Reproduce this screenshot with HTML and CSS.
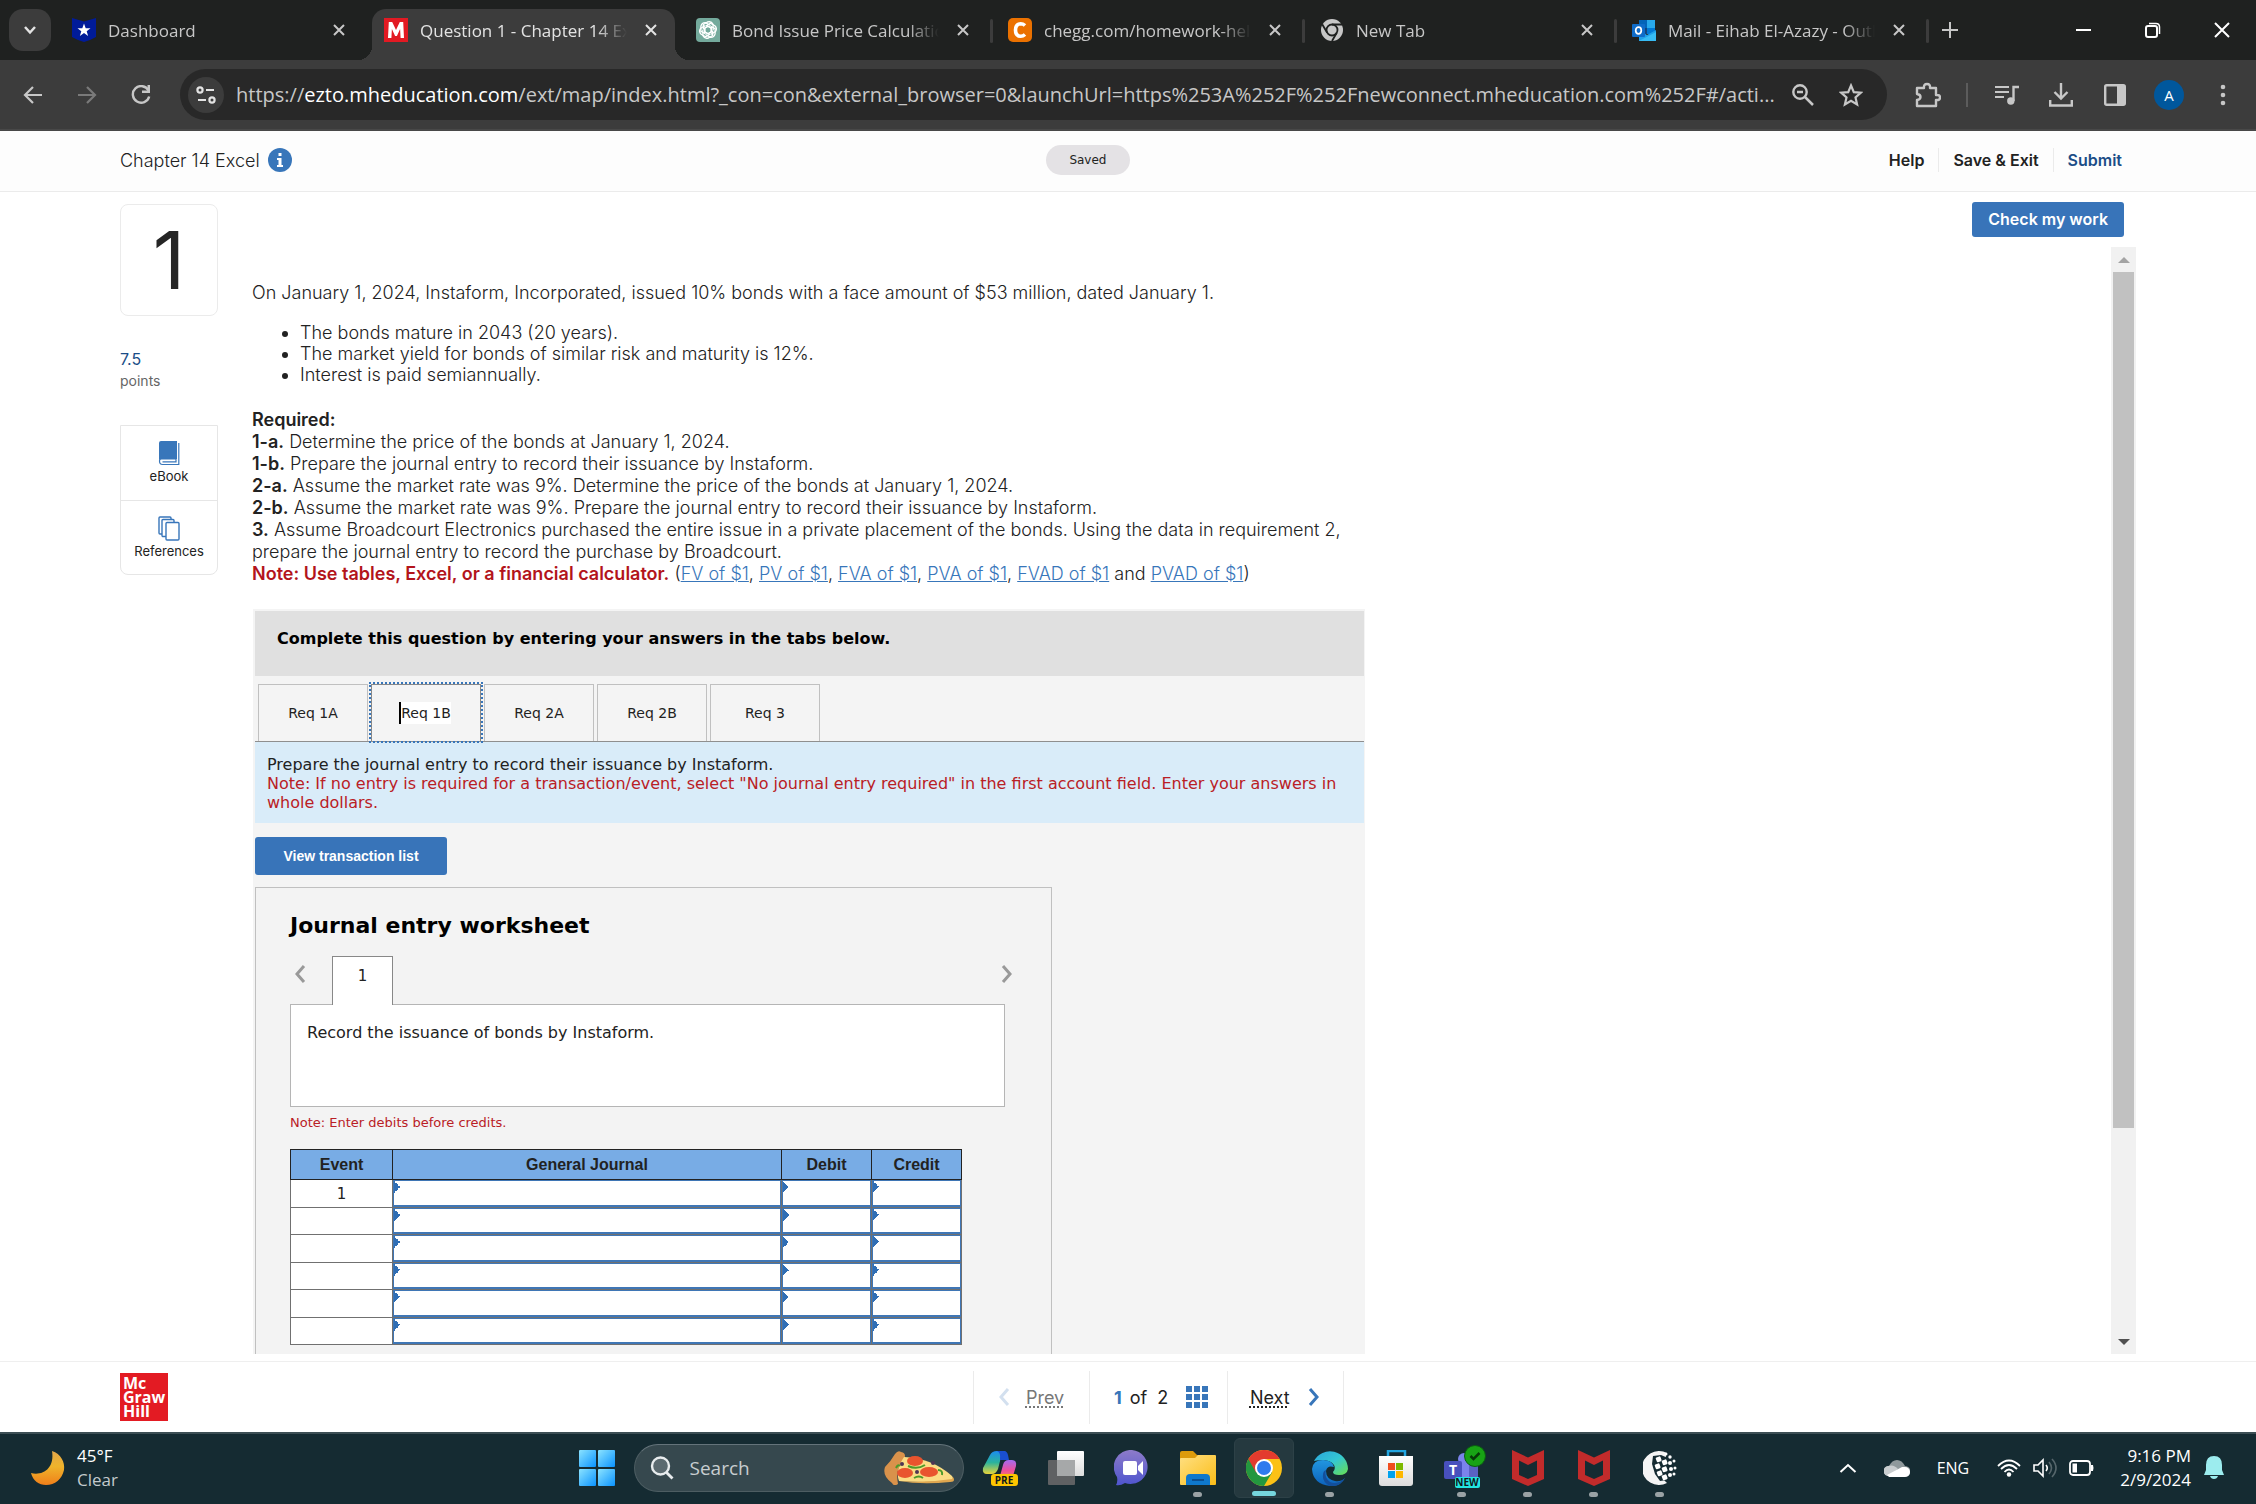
FILE: index.html
```html
<!DOCTYPE html>
<html lang="en">
<head>
    <meta charset="UTF-8">
    <meta name="viewport" content="width=device-width, initial-scale=1.0">
    <title>Question 1 - Chapter 14 Excel</title>
    <link rel="stylesheet" href="styles.css">
</head>
<body>

<!-- shared icons -->
<svg class="defs" width="0" height="0" aria-hidden="true">
    <defs>
        <linearGradient id="gWin" x1="0" y1="0" x2="1" y2="1"><stop offset="0" stop-color="#8be3ff"/><stop offset="1" stop-color="#0a93ff"/></linearGradient>
        <linearGradient id="gMoon" x1="0" y1="0" x2="0" y2="1"><stop offset="0" stop-color="#e2a64a"/><stop offset=".45" stop-color="#efb42b"/><stop offset="1" stop-color="#f07f1a"/></linearGradient>
        <linearGradient id="gFolder" x1="0" y1="0" x2="1" y2="1"><stop offset="0" stop-color="#ffe083"/><stop offset="1" stop-color="#fbbd17"/></linearGradient>
        <linearGradient id="gChat" x1="0" y1="0" x2="0" y2="1"><stop offset="0" stop-color="#8d7bc9"/><stop offset="1" stop-color="#4f55cf"/></linearGradient>
        <linearGradient id="gEdgeTop" x1="0" y1="0" x2="1" y2="1"><stop offset="0" stop-color="#2aa5dc"/><stop offset=".5" stop-color="#34c7d4"/><stop offset="1" stop-color="#69df4c"/></linearGradient>
        <linearGradient id="gEdge" x1="0" y1="0" x2="0" y2="1"><stop offset="0" stop-color="#2196e0"/><stop offset="1" stop-color="#0c62bb"/></linearGradient>
        <linearGradient id="gCopA" x1="0" y1="0" x2="0" y2="1"><stop offset="0" stop-color="#1b8cf0"/><stop offset=".5" stop-color="#2bb39c"/><stop offset="1" stop-color="#e8d43a"/></linearGradient>
        <linearGradient id="gCopB" x1="0" y1="0" x2="0" y2="1"><stop offset="0" stop-color="#a46bf0"/><stop offset=".5" stop-color="#ee4f9a"/><stop offset="1" stop-color="#f59a4a"/></linearGradient>
        <linearGradient id="gWhite" x1="0" y1="0" x2="0" y2="1"><stop offset="0" stop-color="#ffffff"/><stop offset="1" stop-color="#dcdcdc"/></linearGradient>
    </defs>
    <symbol id="i-close" viewBox="0 0 14 14"><path d="M2 2l10 10M12 2L2 12" stroke="currentColor" stroke-width="2" fill="none"/></symbol>
    <symbol id="i-left" viewBox="0 0 12 20"><path d="M10 2L3 10l7 8" stroke="currentColor" stroke-width="3" fill="none"/></symbol>
    <symbol id="i-right" viewBox="0 0 12 20"><path d="M2 2l7 8-7 8" stroke="currentColor" stroke-width="3" fill="none"/></symbol>
    <symbol id="i-mcafee" viewBox="0 0 32 36"><path d="M0 0l16 7.500L32 0v29L16 36 0 29zM7 10.500v14.500l9 4 9-4V10.500L16 15z" fill="#c22b2b" fill-rule="evenodd"/></symbol>
</svg>

<div class="tabstrip">
    <button class="tab-menu" aria-label="Search tabs"><svg width="14" height="10" viewBox="0 0 14 10"><path d="M2 2l5 5.500L12 2" stroke="#e3e3e3" stroke-width="2.500" fill="none"/></svg></button>
    <div class="tab">
        <svg class="favicon" viewBox="0 0 24 24"><path d="M0 0l12 3.500L24 0v19l-6 3-6 2-6-2-6-3z" fill="#001b99"/><path d="M12 5.500l1.700 4.700h4.800l-3.800 3 1.400 4.800-4.100-2.900L7.900 18l1.400-4.800-3.800-3h4.800z" fill="#fff"/></svg>
        <span class="tab-title">Dashboard</span>
        <button class="tab-close" aria-label="Close tab"><svg width="14" height="14"><use href="#i-close"/></svg></button>
    </div>
    <div class="tab active">
        <svg class="favicon" viewBox="0 0 24 24"><path d="M0 0h24v24H0z" fill="#e21a23"/><path d="M4 20L4.800 4h3.400L12 12l3.800-8h3.400L20 20h-3.400l-.5-9-3.200 7h-1.800l-3.200-7-.5 9z" fill="#fff"/></svg>
        <span class="tab-title">Question 1 - Chapter 14 Excel</span>
        <button class="tab-close" aria-label="Close tab"><svg width="14" height="14"><use href="#i-close"/></svg></button>
    </div>
    <div class="tab divided">
        <svg class="favicon" viewBox="0 0 24 24"><path d="M4 0h16q4 0 4 4v20H4q-4 0-4-4V4q0-4 4-4z" fill="#74aa9c"/><g fill="none" stroke="#fff" stroke-width="1.300"><path id="petal" d="M12 8.200L8.800 10v5.500L4.900 13.300V8.200q1-3.700 4.600-3.500L14.500 7.500"/><use href="#petal" transform="rotate(60 12 12)"/><use href="#petal" transform="rotate(120 12 12)"/><use href="#petal" transform="rotate(180 12 12)"/><use href="#petal" transform="rotate(240 12 12)"/><use href="#petal" transform="rotate(300 12 12)"/></g></svg>
        <span class="tab-title">Bond Issue Price Calculation</span>
        <button class="tab-close" aria-label="Close tab"><svg width="14" height="14"><use href="#i-close"/></svg></button>
    </div>
    <div class="tab divided">
        <svg class="favicon" viewBox="0 0 24 24"><rect width="24" height="24" rx="5" fill="#eb7100"/><path d="M17 7.500Q15 5.700 12.700 5.700 7.500 6 7.500 12t5.200 6.300Q15 18.300 17 16.500" fill="none" stroke="#fff" stroke-width="3.600"/></svg>
        <span class="tab-title">chegg.com/homework-help</span>
        <button class="tab-close" aria-label="Close tab"><svg width="14" height="14"><use href="#i-close"/></svg></button>
    </div>
    <div class="tab divided">
        <svg class="favicon" viewBox="0 0 24 24"><circle cx="12" cy="12" r="11" fill="#c7c7c7"/><circle cx="12" cy="12" r="5.500" fill="#c7c7c7" stroke="#1f2120" stroke-width="1.800"/><path d="M12 6.500h10M7.200 14.700l-5-8.500M16.800 14.700L12 23" stroke="#1f2120" stroke-width="1.800"/></svg>
        <span class="tab-title">New Tab</span>
        <button class="tab-close" aria-label="Close tab"><svg width="14" height="14"><use href="#i-close"/></svg></button>
    </div>
    <div class="tab divided">
        <svg class="favicon" viewBox="0 0 24 24"><path d="M7 2h8v8H7z" fill="#0364b8"/><path d="M15 2h8v8h-8z" fill="#28a8ea"/><path d="M7 10h8v6H7z" fill="#14447d"/><path d="M15 10h8v6h-8z" fill="#0078d4"/><path d="M7 12l8 5 9-5v11H7z" fill="#1f9fe8"/><path d="M7 23l17-9v9z" fill="#50d9ff" opacity=".5"/><rect y="6" width="13" height="13" rx="1" fill="#0f6cc9"/><ellipse cx="6.500" cy="12.500" rx="2.800" ry="3.300" fill="none" stroke="#fff" stroke-width="1.700"/></svg>
        <span class="tab-title">Mail - Eihab El-Azazy - Outlook</span>
        <button class="tab-close" aria-label="Close tab"><svg width="14" height="14"><use href="#i-close"/></svg></button>
    </div>
    <button class="new-tab" aria-label="New tab"><svg width="16" height="16" viewBox="0 0 16 16"><path d="M8 0v16M0 8h16" stroke="#c7c7c7" stroke-width="2"/></svg></button>
    <div class="window-buttons">
        <button aria-label="Minimize"><svg width="16" height="16" viewBox="0 0 16 16"><path d="M0 8h15" stroke="#fff" stroke-width="2"/></svg></button>
        <button aria-label="Restore"><svg width="16" height="16" viewBox="0 0 16 16"><rect x="1" y="4" width="11" height="11" rx="2" fill="none" stroke="#fff" stroke-width="2"/><path d="M4 1.500h7q3.500 0 3.500 3.500v7" fill="none" stroke="#fff" stroke-width="1.500"/></svg></button>
        <button aria-label="Close"><svg width="16" height="16" viewBox="0 0 16 16"><path d="M1 1l14 14M15 1L1 15" stroke="#fff" stroke-width="2"/></svg></button>
    </div>
</div>

<div class="toolbar">
    <button class="nav-btn" aria-label="Back"><svg width="20" height="20" viewBox="0 0 20 20"><path d="M19 10H2M10 2l-8 8 8 8" fill="none" stroke="#c7c7c7" stroke-width="2.200"/></svg></button>
    <button class="nav-btn" aria-label="Forward"><svg width="20" height="20" viewBox="0 0 20 20"><path d="M1 10h17M10 2l8 8-8 8" fill="none" stroke="#7a7a7a" stroke-width="2.200"/></svg></button>
    <button class="nav-btn" aria-label="Reload"><svg width="20" height="20" viewBox="0 0 20 20"><path d="M17.500 5.500A8.300 8.300 0 1 0 18.200 11.500" fill="none" stroke="#c7c7c7" stroke-width="2.400"/><path d="M19 0v8h-8V5.500h5.500V0z" fill="#c7c7c7"/></svg></button>
    <div class="address">
        <button class="site-info" aria-label="View site information"><svg width="20" height="18" viewBox="0 0 20 18"><g fill="none" stroke="#e3e3e3" stroke-width="2.200"><circle cx="4" cy="4" r="2.600"/><path d="M10 4h8M2 14h8"/><circle cx="16" cy="14" r="2.600"/></g></svg></button>
        <div class="url">https://<b>ezto.mheducation.com</b>/ext/map/index.html?_con=con&amp;external_browser=0&amp;launchUrl=https%253A%252F%252Fnewconnect.mheducation.com%252F#/acti...</div>
        <button aria-label="Zoom"><svg width="22" height="22" viewBox="0 0 22 22"><circle cx="8" cy="8" r="6.700" fill="none" stroke="#c7c7c7" stroke-width="2.400"/><path d="M5 8h6M13 13l8 8" stroke="#c7c7c7" stroke-width="2.500"/></svg></button>
        <button aria-label="Bookmark this tab"><svg width="24" height="24" viewBox="0 0 24 24"><path d="M12 2.500l2.800 6.600 7.100.6-5.400 4.700 1.600 7L12 17.700 5.900 21.400l1.600-7L2.100 9.700l7.100-.6z" fill="none" stroke="#c7c7c7" stroke-width="2.200"/></svg></button>
    </div>
    <div class="toolbar-actions">
        <button aria-label="Extensions"><svg width="26" height="26" viewBox="0 0 26 26"><path d="M2 6h7q-.5-4 3-4t3 4h6v7q4-.5 4 2.500T21 18v6H2v-6q3.500-.5 3.500-3T2 12z" fill="none" stroke="#c7c7c7" stroke-width="2.400" stroke-linejoin="round"/></svg></button>
        <span class="toolbar-sep"></span>
        <button aria-label="Media"><svg width="24" height="22" viewBox="0 0 24 22"><path d="M0 3h14M0 8h14M0 13h9" stroke="#c7c7c7" stroke-width="2.200"/><path d="M18.500 17V3H24" stroke="#c7c7c7" stroke-width="2.400" fill="none"/><circle cx="15.800" cy="17" r="3.700" fill="#c7c7c7"/></svg></button>
        <button aria-label="Downloads"><svg width="24" height="24" viewBox="0 0 24 24"><path d="M12 0v15M5.500 9l6.500 6.500L18.500 9M1.200 17v5.500h21.600V17" stroke="#c7c7c7" stroke-width="2.400" fill="none"/></svg></button>
        <button aria-label="Side panel"><svg width="22" height="22" viewBox="0 0 22 22"><rect x="1.200" y="1.200" width="19.600" height="19.600" rx="1.500" fill="none" stroke="#c7c7c7" stroke-width="2.400"/><path d="M13 1h8v20h-8z" fill="#c7c7c7"/></svg></button>
        <button class="avatar" aria-label="Profile">A</button>
        <button aria-label="Menu"><svg width="6" height="22" viewBox="0 0 6 22"><g fill="#c7c7c7"><circle cx="3" cy="3" r="2.300"/><circle cx="3" cy="11" r="2.300"/><circle cx="3" cy="19" r="2.300"/></g></svg></button>
    </div>
</div>

<header class="page-header">
    <div class="assignment">
        <span>Chapter 14 Excel</span>
        <svg width="24" height="24" viewBox="0 0 24 24"><circle cx="12" cy="12" r="12" fill="#3876ba"/><path d="M10.500 5h3v3h-3zM9 10h4.500v7H15v2H9v-2h1.500v-5H9z" fill="#fff"/></svg>
    </div>
    <span class="saved">Saved</span>
    <nav class="page-links">
        <a href="#">Help</a>
        <a href="#">Save &amp; Exit</a>
        <a href="#" class="submit">Submit</a>
    </nav>
</header>

<main>
    <aside class="sidebar">
        <div class="question-number">1</div>
        <div class="points"><strong>7.5</strong><span>points</span></div>
        <div class="resources">
            <a href="#"><svg width="22" height="25" viewBox="0 0 22 25"><path d="M3 0h16v18H3q-2 0-2 2V2q0-2 2-2z" fill="#3876ba"/><path d="M1.500 20q0 3.500 3 3.500h16.300V2M4.500 20.800H18V18H3.500q-2 0-2 2" fill="none" stroke="#3876ba" stroke-width="1.200"/></svg>eBook</a>
            <a href="#"><svg width="22" height="25" viewBox="0 0 22 25"><g fill="#fff" stroke="#3876ba" stroke-width="1.400"><rect x="1" y="1" width="12" height="17" rx="1"/><rect x="4" y="3.500" width="12" height="17" rx="1"/><rect x="8" y="6.500" width="13" height="17.500" rx="1"/></g></svg>References</a>
        </div>
    </aside>

    <div class="content">
        <div class="check-row"><button class="btn check">Check my work</button></div>
        <div class="scroller">
            <div class="question">
                <p>On January 1, 2024, Instaform, Incorporated, issued 10% bonds with a face amount of $53 million, dated January 1.</p>
                <ul>
                    <li>The bonds mature in 2043 (20 years).</li>
                    <li>The market yield for bonds of similar risk and maturity is 12%.</li>
                    <li>Interest is paid semiannually.</li>
                </ul>
                <p class="required">
                    <b>Required:</b><br>
                    <b>1-a.</b> Determine the price of the bonds at January 1, 2024.<br>
                    <b>1-b.</b> Prepare the journal entry to record their issuance by Instaform.<br>
                    <b>2-a.</b> Assume the market rate was 9%. Determine the price of the bonds at January 1, 2024.<br>
                    <b>2-b.</b> Assume the market rate was 9%. Prepare the journal entry to record their issuance by Instaform.<br>
                    <b>3.</b> Assume Broadcourt Electronics purchased the entire issue in a private placement of the bonds. Using the data in requirement 2,<br>
                    prepare the journal entry to record the purchase by Broadcourt.<br>
                    <b class="note">Note: Use tables, Excel, or a financial calculator.</b> (<a href="#">FV of $1</a>, <a href="#">PV of $1</a>, <a href="#">FVA of $1</a>, <a href="#">PVA of $1</a>, <a href="#">FVAD of $1</a> and <a href="#">PVAD of $1</a>)
                </p>

                <section class="panel">
                    <h2>Complete this question by entering your answers in the tabs below.</h2>
                    <div class="req-tabs">
                        <button>Req 1A</button>
                        <button class="selected"><span>Req 1B</span></button>
                        <button>Req 2A</button>
                        <button>Req 2B</button>
                        <button>Req 3</button>
                    </div>
                    <div class="instructions">
                        Prepare the journal entry to record their issuance by Instaform.
                        <div class="red">Note: If no entry is required for a transaction/event, select "No journal entry required" in the first account field. Enter your answers in whole dollars.</div>
                    </div>
                    <button class="btn view-list">View transaction list</button>

                    <div class="worksheet">
                        <h3>Journal entry worksheet</h3>
                        <div class="entry-nav">
                            <button class="arrow" aria-label="Previous entry"><svg width="12" height="20"><use href="#i-left"/></svg></button>
                            <button class="entry-tab">1</button>
                            <button class="arrow last" aria-label="Next entry"><svg width="12" height="20"><use href="#i-right"/></svg></button>
                        </div>
                        <div class="entry-text">Record the issuance of bonds by Instaform.</div>
                        <p class="red small">Note: Enter debits before credits.</p>
                        <table>
                            <thead>
                                <tr><th class="c-event">Event</th><th>General Journal</th><th class="c-num">Debit</th><th class="c-num">Credit</th></tr>
                            </thead>
                            <tbody>
                                <tr><td>1</td><td class="cell"><input aria-label="Account, line 1"></td><td class="cell"><input aria-label="Debit, line 1"></td><td class="cell"><input aria-label="Credit, line 1"></td></tr>
                                <tr><td></td><td class="cell"><input aria-label="Account, line 2"></td><td class="cell"><input aria-label="Debit, line 2"></td><td class="cell"><input aria-label="Credit, line 2"></td></tr>
                                <tr><td></td><td class="cell"><input aria-label="Account, line 3"></td><td class="cell"><input aria-label="Debit, line 3"></td><td class="cell"><input aria-label="Credit, line 3"></td></tr>
                                <tr><td></td><td class="cell"><input aria-label="Account, line 4"></td><td class="cell"><input aria-label="Debit, line 4"></td><td class="cell"><input aria-label="Credit, line 4"></td></tr>
                                <tr><td></td><td class="cell"><input aria-label="Account, line 5"></td><td class="cell"><input aria-label="Debit, line 5"></td><td class="cell"><input aria-label="Credit, line 5"></td></tr>
                                <tr><td></td><td class="cell"><input aria-label="Account, line 6"></td><td class="cell"><input aria-label="Debit, line 6"></td><td class="cell"><input aria-label="Credit, line 6"></td></tr>
                            </tbody>
                        </table>
                    </div>
                </section>
            </div>
            <div class="scrollbar">
                <button aria-label="Scroll up"><svg width="12" height="6" viewBox="0 0 12 6"><path d="M0 6l6-6 6 6z" fill="#a3a3a3"/></svg></button>
                <div class="track"><div class="thumb"></div></div>
                <button aria-label="Scroll down"><svg width="12" height="6" viewBox="0 0 12 6"><path d="M0 0l6 6 6-6z" fill="#505050"/></svg></button>
            </div>
        </div>
    </div>
</main>

<footer class="page-footer">
    <div class="logo">Mc<br>Graw<br>Hill</div>
    <nav class="pager">
        <a href="#" class="prev"><svg width="12" height="20"><use href="#i-left"/></svg><span>Prev</span></a>
        <div class="count"><b>1</b> of&nbsp; 2 <svg width="22" height="22" viewBox="0 0 22 22"><path d="M0 0h6v6H0zM8 0h6v6H8zM16 0h6v6h-6zM0 8h6v6H0zM8 8h6v6H8zM16 8h6v6h-6zM0 16h6v6H0zM8 16h6v6H8zM16 16h6v6h-6z" fill="#3876ba"/></svg></div>
        <a href="#" class="next"><span>Next</span><svg width="12" height="20"><use href="#i-right"/></svg></a>
    </nav>
</footer>

<div class="taskbar">
    <div class="weather">
        <svg width="34" height="34" viewBox="0 0 34 34"><path d="M21 0C30 3 34 11 33 19 31 28 24 34 15 34 8 34 2 30 0 22c11 3 24-4 21-22z" fill="url(#gMoon)"/></svg>
        <div>45°F<span>Clear</span></div>
    </div>
    <div class="apps">
        <button class="app" aria-label="Start"><svg width="36" height="36" viewBox="0 0 36 36"><g fill="url(#gWin)"><rect width="17" height="17" rx="1"/><rect x="19" width="17" height="17" rx="1"/><rect y="19" width="17" height="17" rx="1"/><rect x="19" y="19" width="17" height="17" rx="1"/></g></svg></button>
        <label class="search">
            <svg width="24" height="24" viewBox="0 0 24 24"><circle cx="10.500" cy="10" r="8.500" fill="#5b6a70" stroke="#e8ecee" stroke-width="2.400"/><path d="M16.500 16.500l6 6" stroke="#e8ecee" stroke-width="2.800"/></svg>
            <input type="text" placeholder="Search" aria-label="Search">
            <svg width="70" height="34" viewBox="0 0 70 34"><path d="M17 1Q23 2 20 9 11 17 14 33q-4 3-6-1Q-2 25 1 16 7 10 11 3 14-1 17 1z" fill="#d9924b"/><path d="M20 6Q48 7 68 25q3 4-2 5-28 2-51 0-4-11 5-24z" fill="#fbdc84"/><path d="M15 30q28 2 53-2l1-2q3 5-3 5-28 3-51-1z" fill="#e0a64f"/><g fill="#e9542e"><ellipse cx="31" cy="10" rx="8" ry="5"/><ellipse cx="21" cy="22" rx="8" ry="5"/><ellipse cx="45" cy="21" rx="9" ry="5"/></g><g fill="none" stroke="#4c9a2a" stroke-width="2"><path d="M24 15q9 4 17-1M12 17q2-4 4-2M30 27q5-3 9 0M54 19q5 0 4 5"/></g><g fill="#503454"><circle cx="18" cy="13" r="2"/><circle cx="33" cy="21" r="2"/><circle cx="49" cy="12" r="2"/></g></svg>
        </label>
        <button class="app" aria-label="Copilot"><svg width="36" height="36" viewBox="0 0 36 36"><path d="M8 5q2-4 7-4h9q-4 1-5 6l-3 12q-2 5-6 5H5q-5 0-4-6z" fill="url(#gCopA)"/><path d="M15 1h7q3 0 4 4l1 5h-9q1-8-3-9z" fill="#1a4fd0"/><path d="M21 15q1-5 6-5h3q5 0 4 6l-3 10q-2 5-6 5H14q3-1 4-5z" fill="url(#gCopB)"/><rect x="9" y="24" width="27" height="12" rx="3" fill="#fdc500"/><text x="22" y="34" class="tag">PRE</text></svg></button>
        <button class="app" aria-label="Task view"><svg width="36" height="36" viewBox="0 0 36 36"><rect x="9" y="1" width="27" height="25" rx="1" fill="url(#gWhite)"/><rect y="10" width="27" height="25" rx="1" fill="#5f6163"/><path d="M9 10h18v16H9z" fill="#a6a8a9"/></svg></button>
        <button class="app" aria-label="Chat"><svg width="36" height="36" viewBox="0 0 36 36"><path d="M18 0a17 17 0 1 1-7 33Q6 36 2 35q2-3 1-8A17 17 0 0 1 18 0z" fill="url(#gChat)"/><rect x="9" y="11" width="14" height="14" rx="2" fill="#fff"/><path d="M24 16l5-5v14l-5-5z" fill="#fff"/></svg></button>
        <button class="app open" aria-label="File Explorer"><svg width="38" height="36" viewBox="0 0 38 36"><path d="M1 3q0-2 2-2h11l4 4h18v10H1z" fill="#dd9b0b"/><path d="M1 9q0-1 1-1h14l3-3h17q1 0 1 1v28q0 1-1 1H2q-1 0-1-1z" fill="url(#gFolder)"/><path d="M7 35V28q0-4 4-4h16q4 0 4 4v7z" fill="#0f78cc"/><path d="M13 30h12" stroke="#0a4f92" stroke-width="2"/></svg></button>
        <button class="app open current" aria-label="Google Chrome"><svg width="36" height="36" viewBox="0 0 36 36"><circle cx="18" cy="18" r="18" fill="#fbc116"/><path d="M18 18L2.400 9A18 18 0 0 0 18 36l8-13.500z" fill="#23973f"/><path d="M2.400 9A18 18 0 0 1 33.600 9H18L10 22.500z" fill="#e33b2e"/><circle cx="18" cy="18" r="9" fill="#fff"/><circle cx="18" cy="18" r="7" fill="#2f7bee"/></svg></button>
        <button class="app open" aria-label="Microsoft Edge"><svg width="36" height="36" viewBox="0 0 36 36"><path d="M2 11A18 18 0 0 1 36 19q-1 6-9 6-6 0-6-3 3-3 1-7-5-7-20-4z" fill="url(#gEdgeTop)"/><path d="M0 19Q1 10 11 10q9 0 11 7-7-2-8 4 0 8 9 10 6 1 10-3-5 9-15 8Q1 34 0 19z" fill="url(#gEdge)"/><path d="M14 20q-2 8 4 12 8 3 15-4-5 9-15 8-8-4-7-11 0-4 3-5z" fill="#134f9b"/></svg></button>
        <button class="app" aria-label="Microsoft Store"><svg width="36" height="36" viewBox="0 0 36 36"><path d="M10 8V1h17v7" fill="none" stroke="#22a5e0" stroke-width="2.500"/><path d="M1 6h34v27q0 3-3 3H4q-3 0-3-3z" fill="url(#gWhite)"/><path d="M10 13h7v7h-7z" fill="#f04e1f"/><path d="M18 13h7v7h-7z" fill="#7db900"/><path d="M10 21h7v7h-7z" fill="#00a2ee"/><path d="M18 21h7v7h-7z" fill="#fdb700"/></svg></button>
        <button class="app open" aria-label="Microsoft Teams"><svg width="48" height="48" viewBox="-6 0 48 48"><circle cx="20" cy="15" r="6" fill="#7b83eb"/><path d="M18 21h16v18H18z" fill="#5a62c3"/><path d="M12 20h13v16H12z" fill="#7b83eb"/><rect y="17" width="18" height="18" rx="2" fill="#4850bd"/><text x="9" y="31" class="teams-t">T</text><circle cx="31" cy="12" r="10.500" fill="#18a315" stroke="#0b5d12" stroke-width="1"/><path d="M26.500 12l3 3 6-6" fill="none" stroke="#063b08" stroke-width="2.500"/><rect x="11" y="33" width="25" height="11" rx="2" fill="#22e5e0"/><text x="23" y="42" class="tag">NEW</text></svg></button>
        <button class="app open" aria-label="McAfee"><svg width="32" height="36"><use href="#i-mcafee"/></svg></button>
        <button class="app open" aria-label="McAfee WebAdvisor"><svg width="32" height="36"><use href="#i-mcafee"/></svg></button>
        <button class="app open" aria-label="WebMoney"><svg width="34" height="34" viewBox="0 0 34 34"><path d="M24 2A17 17 0 1 0 24 32l-3-3 2-25z" fill="#f4f4f4"/><path d="M10 5l8-1 7 3 2 11-3 11-7 1-5-7-3-10z" fill="#152b32"/><g fill="#fff"><rect x="13" y="6" width="5" height="5" rx="1" transform="rotate(-20 15 8)"/><rect x="12" y="13" width="5" height="5" rx="1" transform="rotate(-20 14 15)"/><rect x="14" y="20" width="5" height="5" rx="1" transform="rotate(-20 16 22)"/><rect x="19" y="9" width="5" height="5" rx="1" transform="rotate(-20 21 11)"/><rect x="19" y="16" width="5" height="5" rx="1" transform="rotate(-20 21 18)"/><rect x="19" y="24" width="5" height="5" rx="1" transform="rotate(-20 21 26)"/><circle cx="23" cy="3" r="1.500"/><circle cx="27" cy="6" r="1.700"/><circle cx="27" cy="12" r="2"/><circle cx="31" cy="10" r="1.500"/><circle cx="28" cy="18" r="2"/><circle cx="32" cy="17" r="1.500"/><circle cx="27" cy="24" r="2"/><circle cx="31" cy="23" r="1.500"/></g></svg></button>
    </div>
    <div class="tray">
        <button aria-label="Show hidden icons"><svg width="18" height="10" viewBox="0 0 18 10"><path d="M1.500 9L9 2l7.500 7" fill="none" stroke="#fff" stroke-width="2"/></svg></button>
        <svg class="cloud" width="26" height="17" viewBox="0 0 26 17"><path d="M5 16a5 5 0 0 1 0-10Q8 0 13 0t8 6a5 5 0 0 1 0 11z" fill="#8f999c"/><path d="M5 16a5 5 0 0 1-1-10q6-2 10 3z" fill="#c9cdcf"/><path d="M3 15L18 7h3a5 5 0 0 1 0 10H5z" fill="#fff"/></svg>
        <span class="lang">ENG</span>
        <svg class="wifi" width="24" height="18" viewBox="0 0 24 18"><g fill="none" stroke="#fff" stroke-width="1.800"><path d="M1 7q11-11 22 0M4 10q8-8 16 0M7.500 13q4.500-5 9 0"/></g><circle cx="12" cy="15.500" r="2.200" fill="#fff"/></svg>
        <svg class="volume" width="25" height="20" viewBox="0 0 25 20"><path d="M1 7h4l5-5v16l-5-5H1z" fill="none" stroke="#fff" stroke-width="1.600"/><path d="M13 7q2.500 3 0 6" fill="none" stroke="#fff" stroke-width="1.600"/><path d="M16 4q5 6 0 12M19 1q8 9 0 18" fill="none" stroke="#56666b" stroke-width="1.600"/></svg>
        <svg class="battery" width="25" height="16" viewBox="0 0 25 16"><rect x="1" y="1" width="20" height="14" rx="3" fill="none" stroke="#fff" stroke-width="1.800"/><path d="M3.500 3.500H8v9H3.500zM22 5h2q1 3 0 6h-2z" fill="#fff"/></svg>
        <div class="clock">9:16 PM<br>2/9/2024</div>
        <svg width="20" height="24" viewBox="0 0 20 24"><path d="M2 9q0-9 8-9t8 9v5l2 5H0l2-5zM6 20h8q-1 3-4 3t-4-3z" fill="#9cecee"/></svg>
    </div>
</div>

</body>
</html>
```
FILE: styles.css
```css
* {
    box-sizing: border-box;
}
body {
    margin: 0;
    height: 100vh;
    display: flex;
    flex-direction: column;
    overflow: hidden;
    background: #fff;
    color: #222;
    font-family: Inter, "Open Sans", sans-serif;
    font-size: 18px;
}
button {
    font: inherit;
    color: inherit;
    background: none;
    border: none;
    padding: 0;
    display: flex;
    align-items: center;
    justify-content: center;
}
svg {
    flex-shrink: 0;
}
.defs {
    position: absolute;
}

/* browser tabs */
.tabstrip {
    display: flex;
    align-items: stretch;
    gap: 9px;
    height: 60px;
    flex-shrink: 0;
    padding: 9px 0 0 9px;
    background: #1f2120;
    color: #c7c7c7;
    font-family: "Open Sans", sans-serif;
    font-size: 17px;
}
.tab-menu {
    width: 42px;
    height: 42px;
    border-radius: 14px;
    background: #3c3c3c;
}
.tab {
    position: relative;
    flex: 0 1 303px;
    min-width: 0;
    display: flex;
    align-items: center;
    gap: 12px;
    padding: 0 12px 9px;
}
.favicon {
    width: 24px;
    height: 24px;
}
.tab-title {
    flex: 1;
    min-width: 0;
    overflow: hidden;
    white-space: nowrap;
    -webkit-mask-image: linear-gradient(to right, #000 85%, transparent);
    mask-image: linear-gradient(to right, #000 85%, transparent);
}
.tab-close {
    width: 24px;
    height: 24px;
}
.tab.active {
    background: #3c3c3c;
    color: #e3e3e3;
    border-radius: 14px 14px 0 0;
}
.tab.active::before,
.tab.active::after {
    content: "";
    position: absolute;
    bottom: 0;
    width: 14px;
    height: 14px;
}
.tab.active::before {
    left: -14px;
    background: radial-gradient(circle at 0 0, transparent 14px, #3c3c3c 14px);
}
.tab.active::after {
    right: -14px;
    background: radial-gradient(circle at 100% 0, transparent 14px, #3c3c3c 14px);
}
.tab.divided::after {
    content: "";
    position: absolute;
    top: 10px;
    right: -6px;
    width: 3px;
    height: 24px;
    border-radius: 2px;
    background: #3c3c3c;
}
.new-tab {
    width: 24px;
    height: 42px;
    margin-left: 6px;
}
.window-buttons {
    display: flex;
    margin-left: auto;
    height: 42px;
}
.window-buttons button {
    width: 69px;
}

/* browser toolbar */
.toolbar {
    display: flex;
    align-items: center;
    height: 71px;
    flex-shrink: 0;
    padding: 0 6px;
    background: #3c3c3c;
    border-bottom: 2px solid #484848;
    font-family: "Open Sans", sans-serif;
}
.nav-btn {
    width: 54px;
    height: 42px;
}
.address {
    flex: 1;
    min-width: 0;
    display: flex;
    align-items: center;
    height: 51px;
    margin-left: 12px;
    padding: 0 12px 0 8px;
    border-radius: 26px;
    background: #282828;
    color: #c7c7c7;
    font-size: 20px;
}
.address button {
    width: 48px;
    height: 36px;
}
.address .site-info {
    width: 36px;
    margin-right: 12px;
    border-radius: 18px;
    background: #3c3c3c;
}
.url {
    flex: 1;
    min-width: 0;
    overflow: hidden;
    white-space: nowrap;
}
.url b {
    font-weight: normal;
    color: #fff;
}
.toolbar-actions {
    display: flex;
    align-items: center;
    margin-left: 14px;
}
.toolbar-actions button {
    width: 54px;
    height: 42px;
}
.toolbar-sep {
    width: 2px;
    height: 24px;
    margin: 0 12px 0 11px;
    background: #5c5c5c;
}
.toolbar-actions .avatar {
    width: 30px;
    height: 30px;
    margin: 0 12px;
    border-radius: 50%;
    background: #00579c;
    color: #fff;
    font-size: 15px;
}

/* assignment header */
.page-header {
    display: grid;
    grid-template-columns: 14fr auto 15fr;
    align-items: center;
    height: 61px;
    flex-shrink: 0;
    padding: 0 134px 2px 120px;
    background: #fdfdfd;
    border-bottom: 1px solid #ebebeb;
}
.assignment {
    display: flex;
    align-items: center;
    gap: 8px;
    font-weight: 300;
}
.saved {
    width: 84px;
    padding: 7px 0;
    border-radius: 15px;
    background: #e4e2e5;
    font-family: "DejaVu Sans", sans-serif;
    font-size: 12px;
    line-height: 16px;
    text-align: center;
}
.page-links {
    display: flex;
    justify-content: flex-end;
    font-size: 16px;
    font-weight: 600;
    line-height: 24px;
}
.page-links a {
    padding: 0 14px;
    border-left: 1px solid #ebebeb;
    color: #222;
    text-decoration: none;
}
.page-links a:first-child {
    border-left: none;
}
.page-links .submit {
    padding-right: 0;
    color: #1b4d87;
}

/* question area */
main {
    flex: 1;
    min-height: 0;
    display: flex;
    gap: 34px;
    padding: 10px 120px 7px;
}
.sidebar {
    flex: 0 0 98px;
    padding-top: 2px;
    color: #666;
}
.question-number {
    border: 1px solid #ebebeb;
    border-radius: 8px;
    color: #252525;
    font-size: 80px;
    font-weight: 400;
    line-height: 110px;
    text-align: center;
}
.points {
    padding: 33px 0 34px;
    font-size: 16px;
    line-height: 21px;
}
.points strong {
    display: block;
    color: #1b4d87;
    font-weight: normal;
}
.points span {
    font-size: 14px;
}
.resources {
    border: 1px solid #e6e6e6;
    border-radius: 0 0 8px 8px;
}
.resources a {
    display: flex;
    flex-direction: column;
    align-items: center;
    gap: 1px;
    height: 74px;
    padding-top: 15px;
    color: #222;
    font-size: 13px;
    line-height: 18px;
    text-decoration: none;
}
.resources a + a {
    border-top: 1px solid #e6e6e6;
}
.content {
    flex: 1;
    min-width: 0;
    display: flex;
    flex-direction: column;
    gap: 10px;
}
.check-row {
    display: flex;
    justify-content: flex-end;
    padding-right: 12px;
}
.btn {
    border-radius: 3px;
    background: #3874b9;
    color: #fff;
    font-weight: bold;
}
.check {
    height: 35px;
    padding: 0 16px 2px;
    font-size: 16px;
    font-weight: 600;
}
.scroller {
    flex: 1;
    min-height: 0;
    display: flex;
    justify-content: space-between;
}
.question {
    width: 1113px;
    padding-top: 35px;
    overflow: hidden;
    color: #222;
    font-weight: 300;
    line-height: 22px;
}
.question p {
    margin: 0;
}
.question ul {
    margin: 18px 0 24px;
    padding-left: 48px;
    line-height: 21px;
}
.question b {
    font-weight: 600;
    color: #222;
}
.question .required {
    margin-bottom: 24px;
    white-space: nowrap;
}
.question a {
    color: #3876ba;
}
.question b.note {
    color: #b3141b;
}

/* answer panel */
.panel {
    margin-left: 1px;
    padding: 2px 1px 0 2px;
    background: #f4f4f4;
    color: #222;
    font-family: "DejaVu Sans", sans-serif;
    font-size: 16px;
    font-weight: 400;
}
.panel h2 {
    margin: 0;
    height: 65px;
    padding: 17px 22px;
    background: #e0e0e0;
    color: #000;
    font-size: 16px;
    line-height: 22px;
}
.req-tabs {
    display: flex;
    gap: 3px;
    height: 66px;
    padding: 8px 3px 0;
    border-bottom: 1px solid #8f8f8f;
    font-size: 14px;
}
.req-tabs button {
    width: 110px;
    border: 1px solid #c0c0c0;
    border-bottom: none;
}
.req-tabs .selected {
    border-color: #888;
    outline: 2px dotted #3876ba;
}
.selected span {
    border-left: 2px solid #000;
    background: #fff;
    margin-left: -2px;
}
.instructions {
    padding: 13px 12px 11px;
    background: #d9ecf9;
    line-height: 19px;
}
.red {
    color: #b92025;
}
.view-list {
    width: 192px;
    height: 38px;
    margin: 14px 0 12px;
    font-family: "Liberation Sans", sans-serif;
    font-size: 14px;
}
.worksheet {
    width: 797px;
    min-height: 480px;
    padding: 24px 46px 0 34px;
    border: 1px solid #c0c0c0;
    background: #f3f3f3;
}
.worksheet h3 {
    margin: 0;
    color: #000;
    font-size: 22px;
    line-height: 28px;
}
.entry-nav {
    display: flex;
    align-items: flex-end;
    margin: 5px 0 -1px;
}
.arrow {
    width: 20px;
    height: 60px;
    padding-bottom: 2px;
    color: #999;
}
.arrow.last {
    margin: 0 -12px 0 auto;
}
.entry-tab {
    width: 61px;
    height: 49px;
    margin-left: 22px;
    padding-bottom: 10px;
    border: 1px solid #888;
    border-bottom: none;
    background: #fff;
    font-size: 15px;
    z-index: 1;
}
.entry-text {
    height: 103px;
    padding: 17px 16px;
    border: 1px solid #b5b5b5;
    background: #fff;
}
.question .small {
    margin: 5px 0 15px;
    font-size: 13px;
}
.worksheet table {
    width: 672px;
    border-collapse: collapse;
    table-layout: fixed;
    background: #fff;
    font-family: "Liberation Sans", sans-serif;
}
.worksheet th {
    height: 30px;
    padding: 0;
    border: 1px solid #222;
    background: #78ace5;
    font-size: 16px;
    line-height: 20px;
}
.worksheet td {
    padding: 0;
    border: 1px solid #707070;
    font-family: "DejaVu Sans", sans-serif;
    font-size: 15px;
    line-height: 20px;
    text-align: center;
}
.c-event {
    width: 102px;
}
.c-num {
    width: 90px;
}
.cell input {
    display: block;
    width: 100%;
    height: 27px;
    padding: 0 8px;
    border: 1px solid #3f76b5;
    border-bottom-width: 2px;
    border-radius: 0;
    font: inherit;
    background: linear-gradient(45deg, #2f6eb5 50%, transparent 50%) 0 0 / 6px 6px no-repeat, linear-gradient(135deg, #2f6eb5 50%, transparent 50%) 0 6px / 6px 6px no-repeat, #fff;
}
tr:nth-child(even) .cell input {
    height: 26px;
}

/* scrollbar */
.scrollbar {
    display: flex;
    flex-direction: column;
    width: 25px;
    background: #f1f1f1;
}
.scrollbar button {
    height: 25px;
}
.track {
    flex: 1;
    padding: 0 2px;
}
.thumb {
    height: 81%;
    background: #c1c1c1;
}

/* pager */
.page-footer {
    display: grid;
    grid-template-columns: 14fr auto 13fr;
    align-items: center;
    height: 71px;
    flex-shrink: 0;
    padding: 0 120px;
    border-top: 1px solid #efefef;
}
.logo {
    width: 48px;
    height: 48px;
    padding: 3px;
    background: #e31b23;
    color: #fff;
    font-family: "Open Sans", sans-serif;
    font-size: 16px;
    font-weight: bold;
    line-height: 14px;
}
.pager {
    display: flex;
    height: 53px;
    border-right: 1px solid #ebebeb;
}
.pager > * {
    display: flex;
    align-items: center;
    border-left: 1px solid #ebebeb;
    color: #222;
    text-decoration: none;
}
.pager span {
    text-decoration: underline dotted;
    text-underline-offset: 3px;
}
.pager .prev {
    width: 116px;
    padding-left: 24px;
    gap: 16px;
    color: #777;
}
.prev svg {
    color: #d3e0ef;
}
.count {
    width: 138px;
    padding-left: 24px;
    gap: 8px;
}
.count b {
    color: #3876ba;
}
.count svg {
    margin-left: 10px;
}
.next {
    width: 116px;
    padding-left: 22px;
    gap: 18px;
}
.next svg {
    color: #3876ba;
}

/* taskbar */
.taskbar {
    display: grid;
    grid-template-columns: 1fr auto 1fr;
    height: 72px;
    flex-shrink: 0;
    padding-bottom: 2px;
    background: #152b32;
    border-top: 2px solid #3c4e54;
    color: #fff;
    font-family: "Open Sans", sans-serif;
    font-size: 17px;
}
.weather {
    display: flex;
    align-items: center;
    gap: 12px;
    padding-left: 31px;
    line-height: 24px;
}
.weather span {
    display: block;
    color: #c3cacd;
}
.apps {
    display: flex;
    align-items: center;
}
.app {
    position: relative;
    width: 66px;
    height: 60px;
}
.app.open::after {
    content: "";
    position: absolute;
    bottom: 1px;
    width: 9px;
    height: 5px;
    border-radius: 3px;
    background: #9aa2a5;
}
.app.current {
    width: 60px;
    margin: 0 3px;
    border-radius: 6px;
    background: #25393f;
    border: 1px solid #2d4147;
}
.app.current::after {
    width: 24px;
    background: #76d6dd;
}
.search {
    display: flex;
    align-items: center;
    gap: 16px;
    width: 330px;
    height: 48px;
    margin: 0 3px 0 4px;
    padding: 0 9px 0 15px;
    border: 1px solid #4d5d62;
    border-top-color: #64737a;
    border-radius: 24px;
    background: #36484e;
}
.search input {
    flex: 1;
    min-width: 0;
    padding: 0;
    border: none;
    background: none;
    font: inherit;
    font-size: 19px;
}
.search input::placeholder {
    color: #c8ced0;
    opacity: 1;
}
.tag {
    fill: #10191c;
    font: bold 10px "Open Sans", sans-serif;
    text-anchor: middle;
}
.teams-t {
    fill: #fff;
    font: bold 14px "Open Sans", sans-serif;
    text-anchor: middle;
}
.tray {
    display: flex;
    align-items: center;
    justify-content: flex-end;
    padding-right: 32px;
}
.cloud {
    margin: 0 27px;
}
.lang {
    font-size: 16px;
}
.wifi {
    margin-left: 28px;
}
.volume {
    margin: 0 11px 0 12px;
}
.clock {
    margin: 0 13px 0 26px;
    line-height: 24px;
    text-align: right;
}
```
